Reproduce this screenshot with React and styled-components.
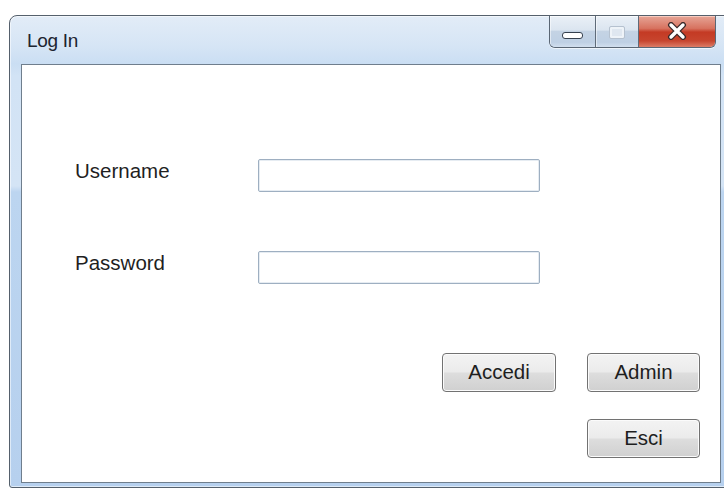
import styled, { createGlobalStyle } from "styled-components";

const GlobalStyle = createGlobalStyle`
  html, body {
    margin: 0;
    padding: 0;
    background: #ffffff;
    overflow: hidden;
  }
  body {
    font-family: "Liberation Sans", Arial, sans-serif;
  }
`;

function App() {
  return (
    <>
      <GlobalStyle />
      <Page>
        <Window>
          <TitleBar>
            <Title>Log In</Title>
            <CaptionGroup>
              <CaptionButton width={45}>
                <MinGlyph />
              </CaptionButton>
              <CaptionButton width={42}>
                <MaxGlyph />
              </CaptionButton>
              <CloseButton>
                <svg width="20" height="18" viewBox="0 0 20 18">
                  <path
                    d="M4 3 L16 15 M16 3 L4 15"
                    stroke="#3b2a2a"
                    strokeWidth="6"
                    strokeLinecap="round"
                    fill="none"
                  />
                  <path
                    d="M4 3 L16 15 M16 3 L4 15"
                    stroke="#ffffff"
                    strokeWidth="3.4"
                    strokeLinecap="round"
                    fill="none"
                  />
                </svg>
              </CloseButton>
            </CaptionGroup>
          </TitleBar>

          <Frame>
            <Client>
              <Form>
                <Label>Username</Label>
                <TextBox type="text" />
                <Label>Password</Label>
                <TextBox type="password" />
              </Form>

              <Actions>
                <Button>Accedi</Button>
                <Button>Admin</Button>
                <Button column={2}>Esci</Button>
              </Actions>
            </Client>
          </Frame>
        </Window>
      </Page>
    </>
  );
}

export default App;

const Page = styled.div`
  padding: 15px 0 0 9px;
  width: 724px;
  height: 489px;
  box-sizing: border-box;
  overflow: hidden;
`;

const Window = styled.div`
  width: 730px;
  height: 473px;
  box-sizing: border-box;
  display: flex;
  flex-direction: column;
  border: 1px solid #55606c;
  border-radius: 8px 8px 3px 3px;
  box-shadow: inset 0 0 0 1px rgba(255, 255, 255, 0.55);
  background: linear-gradient(
    180deg,
    #e2ecf7 0px,
    #d6e5f5 30px,
    #cadef3 48px,
    #d2e3f5 60px,
    #d4e4f5 170px,
    #bcd5f0 176px,
    #b6d0ee 100%
  );
`;

const TitleBar = styled.div`
  height: 48px;
  display: flex;
  justify-content: space-between;
  align-items: flex-start;
  padding-left: 17px;
`;

const Title = styled.span`
  align-self: center;
  margin-top: 1px;
  font-size: 19px;
  color: #1c2430;
  letter-spacing: -0.3px;
`;

const CaptionGroup = styled.div`
  display: flex;
  margin-right: 22px;
  height: 31px;
  border: 1px solid #5a6674;
  border-top: none;
  border-radius: 0 0 6px 6px;
  overflow: hidden;
  box-shadow: 0 1px 0 rgba(255, 255, 255, 0.6);
`;

const CaptionButton = styled.div`
  width: ${(props) => props.width}px;
  display: flex;
  align-items: center;
  justify-content: center;
  border-right: 1px solid #5f6b79;
  box-shadow: inset 0 1px 0 rgba(255, 255, 255, 0.7),
    inset 1px 0 0 rgba(255, 255, 255, 0.5);
  background: linear-gradient(
    180deg,
    #eaf0f7 0%,
    #dbe5f0 45%,
    #c4d3e4 50%,
    #bfd0e4 85%,
    #d2dfee 100%
  );
`;

const MinGlyph = styled.div`
  width: 19px;
  height: 5px;
  margin-top: 7px;
  border: 1px solid #36414f;
  border-radius: 3px;
  background: #ffffff;
`;

const MaxGlyph = styled.div`
  width: 14px;
  height: 11px;
  margin-top: 1px;
  border: 1px solid #b5c1cf;
  border-radius: 2px;
  background: #dfe7f0;
  box-shadow: inset 0 0 0 2px #eef3f8;
`;

const CloseButton = styled.div`
  width: 76px;
  display: flex;
  align-items: center;
  justify-content: center;
  padding-bottom: 2px;
  box-shadow: inset 0 1px 0 rgba(255, 220, 210, 0.7);
  background: linear-gradient(
    180deg,
    #e6a596 0%,
    #d7725f 40%,
    #c43a24 52%,
    #c7452e 80%,
    #dc7c66 100%
  );
`;

const Frame = styled.div`
  flex: 1;
  display: flex;
  padding: 0 0 4px 11px;
`;

const Client = styled.div`
  width: 700px;
  box-sizing: border-box;
  display: flex;
  flex-direction: column;
  background: #ffffff;
  border: 1px solid #6f7e8d;
  padding: 94px 20px 0 53px;
`;

const Form = styled.div`
  display: grid;
  grid-template-columns: 183px 282px;
  grid-auto-rows: 33px;
  row-gap: 59px;
  align-items: center;
`;

const Label = styled.span`
  padding-bottom: 10px;
  font-size: 20.5px;
  color: #1f1f1f;
`;

const TextBox = styled.input`
  width: 282px;
  height: 33px;
  box-sizing: border-box;
  margin: 0;
  border: 1px solid #9eafc1;
  border-radius: 2px;
  box-shadow: inset 0 0 0 1px #e6ecf2;
  background: #ffffff;
  outline: none;
`;

const Actions = styled.div`
  display: grid;
  grid-template-columns: 114px 113px;
  justify-content: end;
  column-gap: 31px;
  row-gap: 27px;
  margin-top: 69px;
`;

const Button = styled.button`
  grid-column: ${(props) => props.column || "auto"};
  height: 39px;
  margin: 0;
  padding: 0 0 2px;
  border: 1px solid #727272;
  border-radius: 4px;
  box-shadow: inset 0 0 0 1px #fbfbfb;
  background: linear-gradient(
    180deg,
    #f3f3f3 0%,
    #ebebeb 48%,
    #dddddd 52%,
    #d0d0d0 100%
  );
  font-family: "Liberation Sans", Arial, sans-serif;
  font-size: 20.5px;
  color: #1e1e1e;
`;
